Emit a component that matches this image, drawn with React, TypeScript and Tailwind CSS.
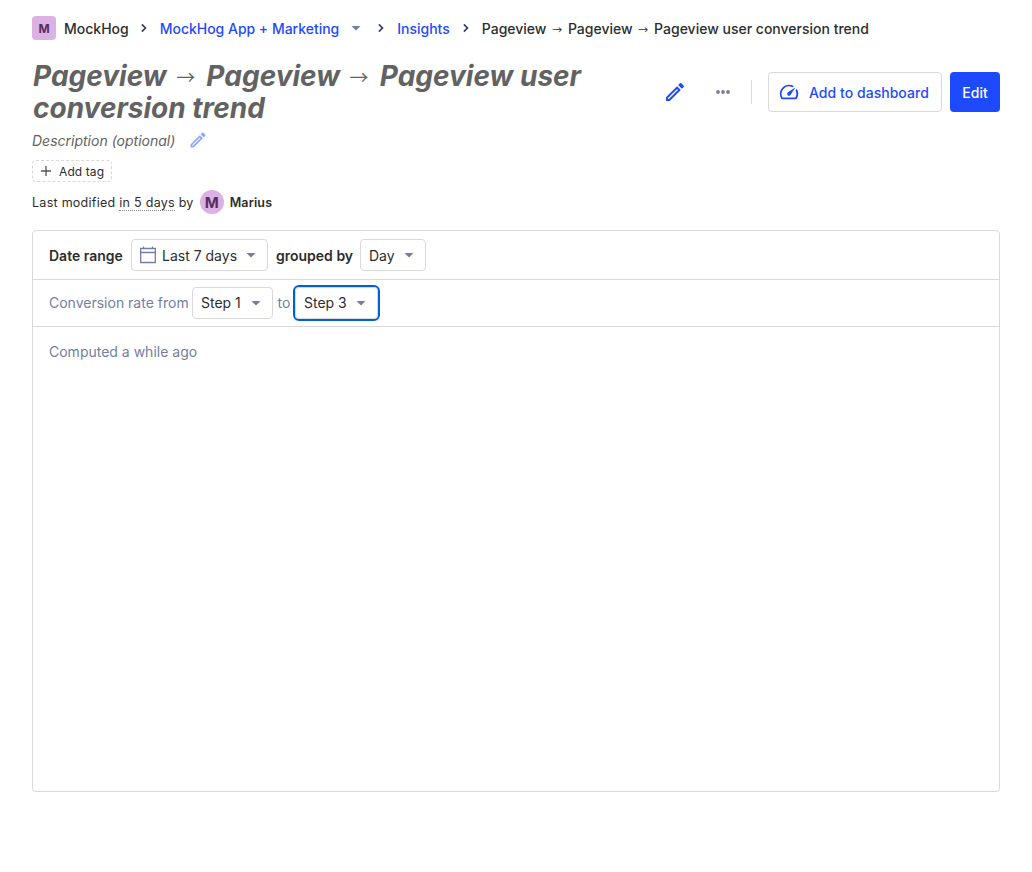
import React from "react";
import { MdOutlineEdit, MdOutlineSpeed } from "react-icons/md";

function Chevron({ className }: { className: string }) {
  return (
    <svg viewBox="0 0 24 24" className={`h-4 w-4 shrink-0 text-[#35416b] ${className}`} fill="currentColor">
      <path d="M7.9 16.5 12.4 12 7.9 7.5 9.7 5.7l6.3 6.3-6.3 6.3z" />
    </svg>
  );
}

function Caret({ className }: { className: string }) {
  return (
    <svg viewBox="0 0 20 20" className={`h-5 w-5 shrink-0 text-[#747ea2] ${className}`} fill="currentColor">
      <path d="M5.5 8h9L10 12.5z" />
    </svg>
  );
}

function Arrow({ className }: { className: string }) {
  return (
    <span className={`inline-block font-['Noto_Sans_CJK_SC',sans-serif] leading-none font-normal not-italic ${className}`}>→</span>
  );
}

function Select({ label, width, focused, children }: { label: string; width: string; focused?: boolean; children?: React.ReactNode }) {
  return (
    <button
      className={`flex h-8 items-center rounded border border-[#d9d9d9] pr-[6px] pl-2 text-[#2d2d2d] ${width} ${focused ? "outline-2 outline-[#005fdb]" : ""}`}
    >
      {children}
      <span className="whitespace-nowrap">{label}</span>
      <Caret className="ml-auto" />
    </button>
  );
}

export default function App() {
  return (
    <div className="h-[872px] bg-white px-8 pt-4 font-['Inter','Liberation_Sans',sans-serif] text-sm leading-5 text-[#2d2d2d]">
      <nav className="flex h-6 items-center font-medium whitespace-nowrap">
        <span className="flex h-6 w-6 items-center justify-center rounded bg-[#dcb1e3] pt-px text-xs font-bold text-[#572e5e]">M</span>
        <span className="ml-2 pt-[2px]">MockHog</span>
        <Chevron className="mr-2 ml-[7px]" />
        <a className="pt-[2px] tracking-[-0.02px] text-[#1d4aff]">MockHog App + Marketing</a>
        <Caret className="ml-[7px]" />
        <Chevron className="mr-2 ml-[7px]" />
        <a className="pt-[2px] text-[#1d4aff]">Insights</a>
        <Chevron className="mx-2" />
        <span className="pt-[2px]">
          Pageview <Arrow className="w-[14px] pb-px pl-[2px] text-[10px]" /> Pageview <Arrow className="w-[14px] pb-px pl-[2px] text-[10px]" /> Pageview user conversion trend
        </span>
      </nav>

      <header className="mt-5 flex h-16 items-center">
        <h1 className="h-16 w-[618px] pl-px text-[28px] leading-8 font-bold text-[#626262] italic">
          Pageview <Arrow className="w-[26.5px] -translate-y-px pl-[3px] text-[19px]" /> Pageview{" "}
          <Arrow className="w-[26.5px] -translate-y-px pl-[3px] text-[19px]" /> Pageview user
          <br />
          conversion trend
        </h1>
        <div className="flex flex-1 items-center">
          <MdOutlineEdit className="ml-[13px] h-6 w-6 text-[#1d4aff]" />
          <svg viewBox="0 0 16 6" className="ml-7 h-[6px] w-4 text-[#747ea2]" fill="currentColor">
            <circle cx="3" cy="3" r="1.9" />
            <circle cx="8" cy="3" r="1.9" />
            <circle cx="13" cy="3" r="1.9" />
          </svg>
          <span className="ml-5 h-6 w-px bg-[#d9d9d9]" />
          <button className="ml-4 flex h-10 w-[174px] items-center rounded border border-[#d9d9d9] pl-[9px] font-medium whitespace-nowrap text-[#1d4aff]">
            <MdOutlineSpeed className="mr-[9px] h-[22px] w-[22px]" />
            <span className="pt-[2px] tracking-[0.04px]">Add to dashboard</span>
          </button>
          <button className="ml-2 h-10 w-[50px] rounded bg-[#1d4aff] pt-[2px] font-medium text-white">Edit</button>
        </div>
      </header>

      <div className="mt-[7px] flex h-5 items-center text-[#626262] italic">
        Description (optional)
        <MdOutlineEdit className="mb-[2px] ml-[13px] h-5 w-5 text-[#8ea5ff]" />
      </div>

      <button className="mt-[9px] flex h-[22px] w-20 items-center rounded border border-dashed border-[#d9d9d9] pl-[6px] text-xs">
        <svg viewBox="0 0 14 14" className="h-[14px] w-[14px] text-[#555555]" stroke="currentColor" strokeWidth="1.3">
          <path d="M7 2v10M2 7h10" />
        </svg>
        <span className="ml-[6px] pt-px tracking-[0.1px]">Add tag</span>
      </button>

      <div className="mt-2 flex h-6 items-center text-[12.5px] tracking-[0.27px] whitespace-nowrap">
        <span className="pt-px">Last modified&nbsp;</span>
        <span className="border-b border-dotted border-[#8a8a8a] pt-px leading-[15px]">in 5 days</span>
        <span className="pt-px">&nbsp;by</span>
        <span className="ml-[6px] flex h-6 w-6 items-center justify-center rounded-full bg-[#dcb1e3] pt-px text-[15px] font-bold tracking-normal text-[#572e5e]">M</span>
        <span className="ml-[6px] pt-px font-semibold tracking-[0.15px]">Marius</span>
      </div>

      <main className="mt-4 h-[562px] rounded border border-[#d9d9d9]">
        <div className="flex h-[49px] items-center border-b border-[#d9d9d9] px-4">
          <span className="w-[74px] pt-[2px] font-semibold">Date range</span>
          <div className="ml-2">
            <Select label="Last 7 days" width="w-[137px] [&>span]:pt-[2px]">
              <svg viewBox="0 0 16 18" className="mr-[6px] h-[18px] w-4 shrink-0 text-[#747ea2]" fill="none" stroke="currentColor" strokeWidth="1.3">
                <path d="M.7 2.5h14.6v14H.7zM1 6.5h14M3.5 .5v2M12.5 .5v2" />
              </svg>
            </Select>
          </div>
          <span className="ml-2 w-[76px] pt-[2px] font-semibold whitespace-nowrap">grouped by</span>
          <div className="ml-2">
            <Select label="Day" width="w-[66px] [&>span]:pt-[2px]" />
          </div>
        </div>
        <div className="flex h-[47px] items-center border-b border-[#d9d9d9] px-4 text-[#747ea2]">
          <span className="w-[139px] whitespace-nowrap">Conversion rate from</span>
          <div className="ml-1">
            <Select label="Step 1" width="w-[81px]" />
          </div>
          <span className="ml-[4.5px] w-[13.5px]">to</span>
          <div className="ml-1">
            <Select label="Step 3" width="w-[83px]" focused />
          </div>
        </div>
        <div className="px-4 pt-[15px] text-[#747ea2]">Computed a while ago</div>
      </main>
    </div>
  );
}
